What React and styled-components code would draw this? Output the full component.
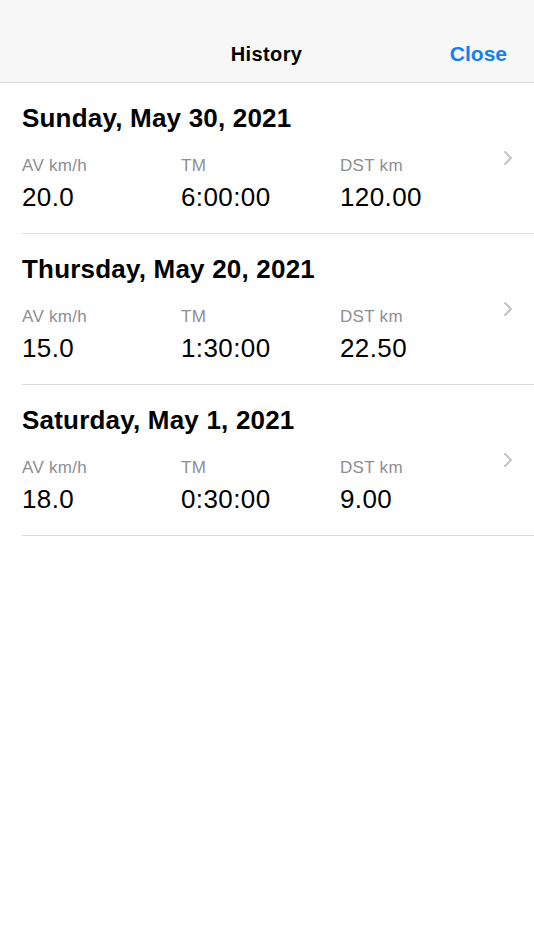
import React from 'react'
import styled, { createGlobalStyle } from 'styled-components'

const GlobalStyle = createGlobalStyle`
  body {
    margin: 0;
    background: #fff;
    font-family: "Liberation Sans", Arial, sans-serif;
    color: #000;
  }
`

const Screen = styled.div`
  width: 534px;
  min-height: 950px;
  background: #fff;
`

const NavBar = styled.header`
  height: 83px;
  background: #f7f7f7;
  border-bottom: 1px solid #d9d9d9;
  display: grid;
  grid-template-columns: 1fr auto 1fr;
  align-items: end;
  padding: 0 27px 16px 22px;
  box-sizing: border-box;
`

const NavTitle = styled.h1`
  grid-column: 2;
  margin: 0 0 0 4px;
  font-size: 20px;
  font-weight: 700;
  letter-spacing: 0.4px;
`

const CloseButton = styled.button`
  justify-self: end;
  border: 0;
  background: none;
  padding: 0;
  font-family: inherit;
  font-size: 21px;
  font-weight: 700;
  color: #147efb;
`

const List = styled.ul`
  list-style: none;
  margin: 0;
  padding: 0 0 0 22px;
`

const Row = styled.li`
  position: relative;
  height: 151px;
  box-sizing: border-box;
  padding-top: 20px;
  border-bottom: 1px solid #dcdcdc;
`

const DateTitle = styled.h2`
  margin: 0;
  font-size: 26px;
  font-weight: 700;
  line-height: 30px;
  letter-spacing: 0.2px;
`

const Stats = styled.div`
  display: grid;
  grid-template-columns: 159px 159px 1fr;
  margin-top: 23px;
`

const Stat = styled.div`
  display: flex;
  flex-direction: column;
`

const Label = styled.span`
  font-size: 17px;
  line-height: 20px;
  letter-spacing: 0.3px;
  color: #8e8e93;
`

const Value = styled.span`
  margin-top: 6px;
  font-size: 26px;
  line-height: 30px;
  letter-spacing: 0.4px;
`

const Chevron = styled.svg`
  position: absolute;
  right: 21px;
  top: 67px;
`

const rides = [
  { date: 'Sunday, May 30, 2021', av: '20.0', tm: '6:00:00', dst: '120.00' },
  { date: 'Thursday, May 20, 2021', av: '15.0', tm: '1:30:00', dst: '22.50' },
  { date: 'Saturday, May 1, 2021', av: '18.0', tm: '0:30:00', dst: '9.00' },
]

const App = () => (
  <>
    <GlobalStyle />
    <Screen>
      <NavBar>
        <NavTitle>History</NavTitle>
        <CloseButton>Close</CloseButton>
      </NavBar>
      <List>
        {rides.map(r => (
          <Row key={r.date}>
            <DateTitle>{r.date}</DateTitle>
            <Stats>
              <Stat>
                <Label>AV km/h</Label>
                <Value>{r.av}</Value>
              </Stat>
              <Stat>
                <Label>TM</Label>
                <Value>{r.tm}</Value>
              </Stat>
              <Stat>
                <Label>DST km</Label>
                <Value>{r.dst}</Value>
              </Stat>
            </Stats>
            <Chevron width="10" height="16" viewBox="0 0 10 16">
              <path d="M2 2 L8 8 L2 14" fill="none" stroke="#c4c4c7" strokeWidth="2" strokeLinecap="round" strokeLinejoin="round" />
            </Chevron>
          </Row>
        ))}
      </List>
    </Screen>
  </>
)

export default App
